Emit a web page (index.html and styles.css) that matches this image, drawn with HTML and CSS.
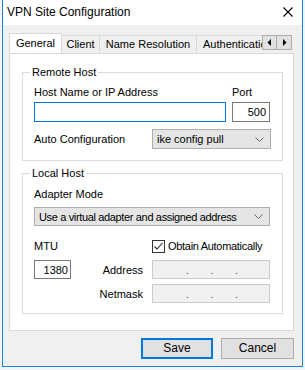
FILE: index.html
```html
<!DOCTYPE html>
<html lang="en">
<head>
  <meta charset="UTF-8" />
  <title>VPN Site Configuration</title>
  <link rel="stylesheet" href="styles.css">
</head>
<body>
  <div class="window">
    <div class="titlebar">
      <span class="title">VPN Site Configuration</span>
      <svg class="close" width="10" height="10" viewBox="0 0 10 10">
        <path d="M0.5 0.5 L9.5 9.5 M9.5 0.5 L0.5 9.5" stroke="#000" stroke-width="1.1" fill="none"/>
      </svg>
    </div>

    <div class="body">
      <div class="tabstrip">
        <div class="tabs">
          <div class="tab active">General</div>
          <div class="tab tab-client">Client</div>
          <div class="tab tab-names">Name Resolution</div>
          <div class="tab tab-auth">Authentication</div>
        </div>
        <div class="scroller">
          <div class="scroll-btn">
            <svg width="5" height="7" viewBox="0 0 5 7"><path d="M4 0 L4 7 L0.5 3.5 Z" fill="#000"/></svg>
          </div>
          <div class="scroll-btn">
            <svg width="5" height="7" viewBox="0 0 5 7"><path d="M1 0 L1 7 L4.5 3.5 Z" fill="#000"/></svg>
          </div>
        </div>
      </div>

      <div class="panel">
        <fieldset class="group remote">
          <legend>Remote Host</legend>
          <div class="remote-grid">
            <div class="label">Host Name or IP Address</div>
            <div class="label">Port</div>
            <div class="input focused"></div>
            <div class="input num">500</div>
          </div>
          <div class="row auto-row">
            <div class="label auto-label">Auto Configuration</div>
            <div class="select auto-select">
              <span>ike config pull</span>
              <svg class="chevron" width="9" height="5" viewBox="0 0 9 5"><path d="M0.5 0.5 L4.5 4.5 L8.5 0.5" stroke="#666" fill="none"/></svg>
            </div>
          </div>
        </fieldset>

        <fieldset class="group local">
          <legend>Local Host</legend>
          <div class="label">Adapter Mode</div>
          <div class="select adapter-select">
            <span>Use a virtual adapter and assigned address</span>
            <svg class="chevron" width="9" height="5" viewBox="0 0 9 5"><path d="M0.5 0.5 L4.5 4.5 L8.5 0.5" stroke="#666" fill="none"/></svg>
          </div>
          <div class="local-grid">
            <div class="label mtu-label">MTU</div>
            <div></div>
            <div class="check-row">
              <div class="checkbox">
                <svg width="11" height="11" viewBox="0 0 11 11"><path d="M1.5 5.5 L4 8 L9.5 2" stroke="#222" stroke-width="1.1" fill="none"/></svg>
              </div>
              <span>Obtain Automatically</span>
            </div>
            <div class="input num mtu">1380</div>
            <div class="label side">Address</div>
            <div class="input ip"><span>.</span><span>.</span><span>.</span></div>
            <div></div>
            <div class="label side">Netmask</div>
            <div class="input ip"><span>.</span><span>.</span><span>.</span></div>
          </div>
        </fieldset>
      </div>

      <div class="buttons">
        <div class="button default">Save</div>
        <div class="button">Cancel</div>
      </div>
    </div>
  </div>
</body>
</html>
```

FILE: styles.css
```css
body {
  margin: 0;
  background: #f4f4f4;
  font-family: 'Liberation Sans', Arial, sans-serif;
  font-size: 11px;
  color: #000;
}

.window {
  margin-left: 2px;
  width: 299px;
  height: 366px;
  border: 1px solid #1883d7;
  border-top: none;
  background: #f0f0f0;
}

.titlebar {
  height: 25px;
  background: #fff;
  display: flex;
  align-items: center;
  justify-content: space-between;
  padding: 0 9px 0 4px;
}

.title {
  font-size: 12px;
  padding-bottom: 1px;
}

.close {
  margin-top: -1px;
}

.body {
  padding: 8px 8px 0 6px;
}

.tabstrip {
  display: flex;
  height: 20px;
  align-items: flex-start;
}

.tabs {
  display: flex;
  align-items: flex-end;
  width: 253px;
  height: 20px;
  overflow: hidden;
}

.tab {
  flex: none;
  height: 18px;
  box-sizing: border-box;
  border: 1px solid #d9d9d9;
  border-bottom: none;
  border-left: none;
  background: #f0f0f0;
  line-height: 17px;
  text-align: center;
  white-space: nowrap;
}

.tab.active {
  width: 53px;
  height: 21px;
  margin-bottom: -1px;
  border-left: 1px solid #d9d9d9;
  background: #fff;
  line-height: 19px;
  position: relative;
  z-index: 1;
}

.tab-client { width: 38px; }
.tab-names { width: 97px; }
.tab-auth { width: 80px; text-align: left; padding-left: 6px; }

.scroller {
  display: flex;
  margin-top: 2px;
}

.scroll-btn {
  width: 15px;
  height: 15px;
  box-sizing: border-box;
  border: 1px solid #adadad;
  background: #e1e1e1;
  display: flex;
  align-items: center;
  justify-content: center;
}

.scroll-btn + .scroll-btn {
  border-left: none;
}

.panel {
  width: 285px;
  height: 278px;
  box-sizing: border-box;
  border: 1px solid #d9d9d9;
  background: #fff;
  padding: 11px 10px 0 12px;
}

.group {
  margin: 0;
  border: 1px solid #dcdcdc;
  padding: 6px 11px 11px 11px;
  width: 261px;
  box-sizing: border-box;
}

.group legend {
  padding: 0 2px;
  margin-left: -4px;
  line-height: 14px;
}

.local {
  margin-top: 5px;
  padding-top: 7px;
  padding-bottom: 10px;
}

.label {
  line-height: 14px;
}

.remote-grid {
  display: grid;
  grid-template-columns: 192px 38px;
  column-gap: 6px;
  row-gap: 3px;
  align-items: end;
}

.input {
  height: 20px;
  box-sizing: border-box;
  border: 1px solid #7a7a7a;
  background: #fff;
  line-height: 18px;
}

.input.focused {
  border-color: #0078d7;
}

.num {
  text-align: right;
  padding-right: 3px;
}

.row {
  display: flex;
  align-items: center;
}

.auto-row {
  margin-top: 7px;
  justify-content: space-between;
}

.select {
  height: 20px;
  box-sizing: border-box;
  border: 1px solid #adadad;
  background: #e5e5e5;
  display: flex;
  align-items: center;
  justify-content: space-between;
  padding: 0 6px 0 4px;
  white-space: nowrap;
}

.auto-select {
  width: 119px;
}

.chevron {
  flex: none;
}

.adapter-select {
  margin-top: 6px;
  width: 236px;
  height: 19px;
  letter-spacing: -0.35px;
}

.local-grid {
  display: grid;
  grid-template-columns: 37px 81px 118px;
  grid-template-rows: 18px 19px 19px;
  row-gap: 5px;
  margin-top: 11px;
  align-items: center;
}

.check-row {
  display: flex;
  align-items: center;
  gap: 3px;
  white-space: nowrap;
  letter-spacing: -0.3px;
}

.checkbox {
  width: 13px;
  height: 13px;
  box-sizing: border-box;
  border: 1px solid #333;
  background: #fff;
  display: flex;
  align-items: center;
  justify-content: center;
}

.mtu {
  height: 19px;
  padding-right: 2px;
}

.side {
  text-align: right;
  padding-right: 9px;
}

.input.ip {
  height: 19px;
  border-color: #ccc;
  background: #f0f0f0;
  display: flex;
  justify-content: space-around;
  padding: 0 20px 0 22px;
  color: #555;
}

.buttons {
  display: flex;
  justify-content: flex-end;
  gap: 8px;
  padding-top: 7px;
}

.button {
  width: 73px;
  height: 21px;
  box-sizing: border-box;
  border: 1px solid #adadad;
  background: #e1e1e1;
  text-align: center;
  line-height: 19px;
  font-size: 12px;
}

.button.default {
  width: 72px;
  border: 2px solid #0078d7;
  line-height: 17px;
}
```
